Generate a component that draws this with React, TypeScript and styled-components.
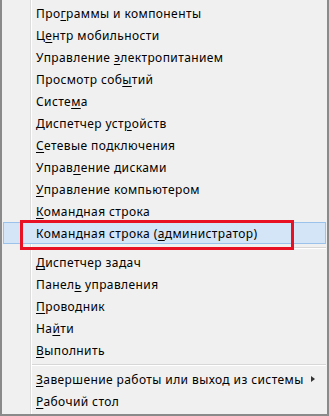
import { Fragment } from "react";
import styled, { createGlobalStyle } from "styled-components";

const GlobalStyle = createGlobalStyle`
  html, body {
    margin: 0;
    padding: 0;
    background: #f0f0f0;
  }
  body {
    font-family: "Noto Sans", "Open Sans", Arial, sans-serif;
  }
`;

export const MenuFrame = styled.div`
  width: 329px;
  height: 416px;
  box-sizing: border-box;
  border: 2px solid #8a8a8a;
  border-top: none;
  padding: 2px 1px 0;
  background: linear-gradient(
    to right,
    transparent 28px,
    #dcdcdc 28px,
    #dcdcdc 29px,
    #ffffff 29px,
    #ffffff 30px,
    transparent 30px
  );
  background-color: #f0f0f0;
  display: flex;
  flex-direction: column;
`;

export const MenuItem = styled.div<{ $active?: boolean }>`
  position: relative;
  height: 22px;
  box-sizing: border-box;
  display: flex;
  align-items: center;
  padding-left: 32px;
  padding-right: 10px;
  font-size: 12px;
  letter-spacing: 0.4px;
  color: #000;
  white-space: nowrap;
  border: 1px solid ${(p) => (p.$active ? "#9ac2ea" : "transparent")};
  background: ${(p) => (p.$active ? "#d3e5f7" : "transparent")};

  .key {
    text-decoration: underline;
    text-underline-offset: 2px;
  }
  .label {
    flex: 1;
  }
`;

export const Separator = styled.div`
  height: 7px;
  display: flex;
  align-items: center;
  padding-left: 29px;
  &::after {
    content: "";
    flex: 1;
    height: 1px;
    background: #d7d7d7;
    box-shadow: 0 1px 0 #ffffff;
  }
`;

export const SubArrow = styled.span`
  width: 0;
  height: 0;
  border-top: 3.5px solid transparent;
  border-bottom: 3.5px solid transparent;
  border-left: 4px solid #333;
`;

export const Callout = styled.div`
  position: absolute;
  left: 16px;
  top: -3px;
  width: 274px;
  height: 30px;
  box-sizing: border-box;
  border: 3px solid #e81123;
  pointer-events: none;
`;

type Item = { text: string; key: number; active?: boolean; submenu?: boolean };

const groups: Item[][] = [
  [
    { text: "Программы и компоненты", key: 3 },
    { text: "Центр мобильности", key: 1 },
    { text: "Управление электропитанием", key: 11 },
    { text: "Просмотр событий", key: 12 },
    { text: "Система", key: 5 },
    { text: "Диспетчер устройств", key: 13 },
    { text: "Сетевые подключения", key: 0 },
    { text: "Управление дисками", key: 5 },
    { text: "Управление компьютером", key: 0 },
    { text: "Командная строка", key: 0 },
    { text: "Командная строка (администратор)", key: 18, active: true },
  ],
  [
    { text: "Диспетчер задач", key: 0 },
    { text: "Панель управления", key: 5 },
    { text: "Проводник", key: 0 },
    { text: "Найти", key: 2 },
    { text: "Выполнить", key: 0 },
  ],
  [
    { text: "Завершение работы или выход из системы", key: 0, submenu: true },
    { text: "Рабочий стол", key: 0 },
  ],
];

const Label = ({ text, at }: { text: string; at: number }) => (
  <span className="label">
    {text.slice(0, at)}
    <span className="key">{text[at]}</span>
    {text.slice(at + 1)}
  </span>
);

export default function App() {
  return (
    <>
      <GlobalStyle />
      <MenuFrame>
        {groups.map((group, gi) => (
          <Fragment key={gi}>
            {gi > 0 && <Separator />}
            {group.map((item) => (
              <MenuItem key={item.text} $active={item.active}>
                <Label text={item.text} at={item.key} />
                {item.submenu && <SubArrow />}
                {item.active && <Callout />}
              </MenuItem>
            ))}
          </Fragment>
        ))}
      </MenuFrame>
    </>
  );
}
